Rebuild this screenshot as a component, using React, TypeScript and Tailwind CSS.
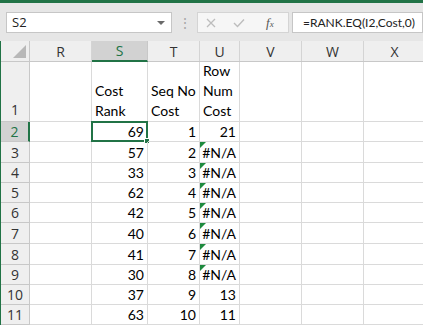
import React from 'react';

type Col = { key: string; w: number };

const cols: Col[] = [
    { key: 'R', w: 62 },
    { key: 'S', w: 56 },
    { key: 'T', w: 52 },
    { key: 'U', w: 40 },
    { key: 'V', w: 62 },
    { key: 'W', w: 62 },
    { key: 'X', w: 62 },
];

const rowHeights = [20, 21, 20, 20, 20, 21, 21, 20, 20, 20];

// rows 2..11: [S, T, U]
const data: [number, number, string][] = [
    [69, 1, '21'],
    [57, 2, '#N/A'],
    [33, 3, '#N/A'],
    [62, 4, '#N/A'],
    [42, 5, '#N/A'],
    [40, 6, '#N/A'],
    [41, 7, '#N/A'],
    [30, 8, '#N/A'],
    [37, 9, '13'],
    [63, 10, '11'],
];

const cellFont = { fontFamily: 'Lato, "Liberation Sans", sans-serif' };
const uiFont = { fontFamily: '"Open Sans", "Liberation Sans", sans-serif' };

function ErrorFlag() {
    return (
        <span className="absolute left-0 top-0 w-0 h-0 border-t-[6px] border-t-[#1e8a3e] border-r-[6px] border-r-transparent" />
    );
}

export default function App() {
    return (
        <div className="w-[423px] h-[328px] overflow-hidden bg-white relative" style={uiFont}>
            {/* title strip */}
            <div className="h-[3px] bg-[#217346]" />

            {/* formula bar */}
            <div className="h-[38px] bg-[#e6e6e6] flex items-start pt-[9px] pl-[6px]">
                <div className="w-[166px] h-[21px] bg-white border border-[#c6c6c6] flex items-center justify-between pl-[5px] pr-[6px]">
                    <span className="text-[13px] text-[#222]">S2</span>
                    <span className="w-0 h-0 border-l-[4px] border-r-[4px] border-t-[4px] border-l-transparent border-r-transparent border-t-[#6a6a6a]" />
                </div>
                <div className="w-[25px] h-[21px] flex items-center justify-center text-[#a8a8a8] text-[14px] leading-none">⋮</div>
                <div className="w-[92px] h-[21px] bg-[#f6f6f6] border border-[#d4d4d4] flex items-center pl-[8px] gap-[17px]">
                    <svg width="10" height="10" viewBox="0 0 10 10">
                        <path d="M1 1 L9 9 M9 1 L1 9" stroke="#bdbdbd" strokeWidth="1.3" fill="none" />
                    </svg>
                    <svg width="12" height="10" viewBox="0 0 12 10">
                        <path d="M1 5 L4.5 8.5 L11 1.5" stroke="#bdbdbd" strokeWidth="1.4" fill="none" />
                    </svg>
                    <span className="text-[13px] italic text-[#555] ml-[4px]" style={{ fontFamily: '"Liberation Serif", serif' }}>
                        f<span className="text-[9px]">x</span>
                    </span>
                </div>
                <div className="ml-[3px] w-[131px] h-[21px] bg-white border border-[#c6c6c6] flex items-center pl-[10px] overflow-hidden">
                    <span className="text-[12px] text-[#222] whitespace-nowrap" style={cellFont}>=RANK.EQ(I2,Cost,0)</span>
                </div>
            </div>

            {/* grid */}
            <div className="border-l border-[#217346]">
                {/* column headers */}
                <div className="flex h-[21px] bg-[#efefef] border-b border-[#c8c8c8]">
                    <div className="w-[29px] shrink-0 border-r border-[#c8c8c8] relative flex items-end justify-end p-[3px]">
                        <span className="w-0 h-0 border-l-[13px] border-l-transparent border-b-[13px] border-b-[#b8b8b8]" />
                    </div>
                    {cols.map((c) => (
                        <div
                            key={c.key}
                            style={{ width: c.w }}
                            className={
                                c.key === 'S'
                                    ? 'shrink-0 flex items-center justify-center text-[14px] bg-[#d2d2d2] text-[#217346] border-r border-[#c8c8c8] border-b-2 border-b-[#217346] -mb-px'
                                    : 'shrink-0 flex items-center justify-center text-[14px] text-[#333] border-r border-[#d4d4d4]'
                            }
                        >
                            {c.key}
                        </div>
                    ))}
                </div>

                {/* row 1 */}
                <div className="flex h-[60px]" style={cellFont}>
                    <div className="w-[29px] shrink-0 bg-[#efefef] border-r border-b border-[#c8c8c8] flex items-end justify-center pb-[1px] text-[14px] text-[#333]" style={uiFont}>
                        1
                    </div>
                    {cols.map((c) => (
                        <div
                            key={c.key}
                            style={{ width: c.w }}
                            className="shrink-0 border-r border-b border-[#dadada] flex flex-col justify-end px-[3px] text-[14px] leading-[20px] text-black whitespace-nowrap overflow-visible"
                        >
                            {c.key === 'S' && (
                                <>
                                    <span>Cost</span>
                                    <span>Rank</span>
                                </>
                            )}
                            {c.key === 'T' && (
                                <>
                                    <span>Seq No</span>
                                    <span>Cost</span>
                                </>
                            )}
                            {c.key === 'U' && (
                                <>
                                    <span>Row</span>
                                    <span>Num</span>
                                    <span>Cost</span>
                                </>
                            )}
                        </div>
                    ))}
                </div>

                {/* data rows */}
                {data.map((r, i) => {
                    const rowNo = i + 2;
                    const sel = rowNo === 2;
                    return (
                        <div key={rowNo} className="flex" style={{ height: rowHeights[i], ...cellFont }}>
                            <div
                                className={
                                    sel
                                        ? 'w-[29px] shrink-0 bg-[#d2d2d2] text-[#217346] border-b border-[#c8c8c8] border-r-2 border-r-[#217346] flex items-center justify-center text-[14px]'
                                        : 'w-[29px] shrink-0 bg-[#efefef] text-[#333] border-r border-b border-[#c8c8c8] flex items-center justify-center text-[14px]'
                                }
                                style={uiFont}
                            >
                                {rowNo}
                            </div>
                            {cols.map((c) => {
                                let content: React.ReactNode = null;
                                if (c.key === 'S') content = r[0];
                                if (c.key === 'T') content = r[1];
                                if (c.key === 'U') content = r[2];
                                const isErr = c.key === 'U' && r[2] === '#N/A';
                                return (
                                    <div
                                        key={c.key}
                                        style={{ width: c.w }}
                                        className="shrink-0 relative border-r border-b border-[#dadada] flex items-end justify-end px-[3px] text-[14px] leading-[19px] text-black"
                                    >
                                        {isErr && <ErrorFlag />}
                                        {content}
                                        {sel && c.key === 'S' && (
                                            <span className="absolute -left-px -top-px -right-px -bottom-px border-2 border-[#217346]">
                                                <span className="absolute -right-[4px] -bottom-[4px] w-[6px] h-[6px] bg-[#217346] border border-white" />
                                            </span>
                                        )}
                                    </div>
                                );
                            })}
                        </div>
                    );
                })}
            </div>
        </div>
    );
}
